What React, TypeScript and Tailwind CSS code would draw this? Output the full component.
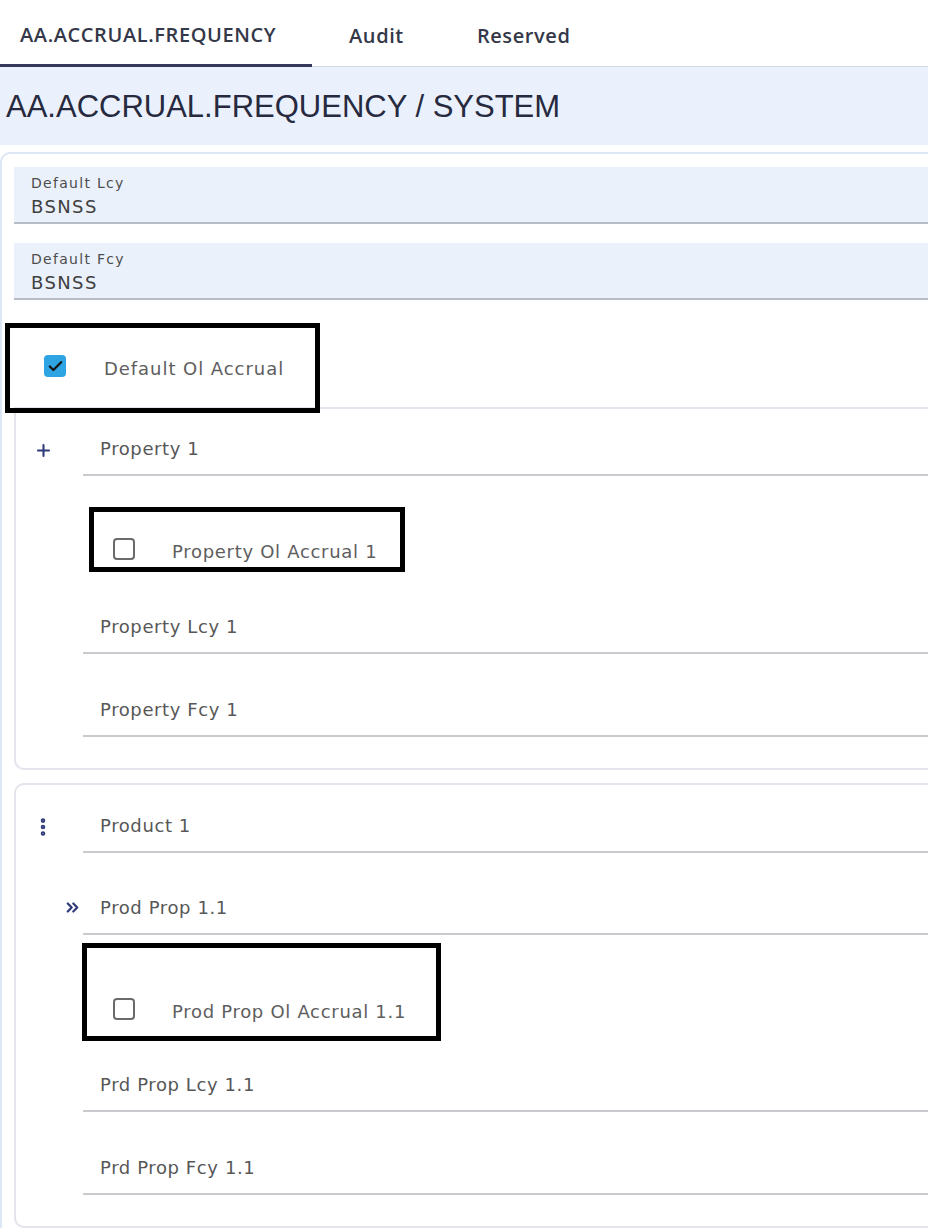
import React from "react";
import { Plus, Check, EllipsisVertical, ChevronsRight } from "lucide-react";

const wideFont = { fontFamily: "'DejaVu Sans', Verdana, sans-serif" };

const Annotation: React.FC<{ className: string }> = ({ className }) => (
  <div className={`absolute border-[5px] border-black pointer-events-none ${className}`} />
);

const Box: React.FC<{ checked?: boolean }> = ({ checked }) =>
  checked ? (
    <span className="w-[22px] h-[22px] shrink-0 rounded-[4px] bg-[#2fa4e3] flex items-center justify-center">
      <Check className="w-[17px] h-[17px] text-[#141414]" strokeWidth={3.2} />
    </span>
  ) : (
    <span className="w-[22px] h-[22px] shrink-0 rounded-[4px] border-2 border-[#6b6b6b] bg-white" />
  );

const FilledField: React.FC<{ label: string; value: string }> = ({ label, value }) => (
  <div className="ml-[12px] h-[57px] bg-[#eaf1fb] border-b-2 border-[#b8bcc4] pl-[17px] pt-[7px] flex flex-col" style={wideFont}>
    <span className="text-[14px] leading-[18px] text-[#4d4d4d] tracking-[1.3px]">{label}</span>
    <span className="mt-[4px] text-[18px] leading-[22px] text-[#404040] tracking-[1.4px]">{value}</span>
  </div>
);

const LineField: React.FC<{ label: string; icon?: React.ReactNode; height?: string }> = ({
  label,
  icon,
  height = "h-[83px]",
}) => (
  <div className={`flex ${height}`}>
    <div className="w-[67px] relative shrink-0">{icon}</div>
    <div className="flex-1 border-b-2 border-[#c9cacd] flex items-end pl-[17px] pb-[14px]">
      <span className="text-[18px] leading-[22px] text-[#575757] tracking-[0.6px]" style={wideFont}>
        {label}
      </span>
    </div>
  </div>
);

const CheckRow: React.FC<{ label: string; checked?: boolean; className: string; boxClass: string }> = ({
  label,
  checked,
  className,
  boxClass,
}) => (
  <div className={`relative ${className}`}>
    <div className="flex items-start gap-[37px] pl-[97px]">
      <Box checked={checked} />
      <span className="text-[18px] leading-[22px] mt-[3px] text-[#5e5e5e] tracking-[0.7px]" style={wideFont}>
        {label}
      </span>
    </div>
    <Annotation className={boxClass} />
  </div>
);

export default function App() {
  return (
    <div className="w-[928px] h-[1228px] overflow-hidden bg-white" style={{ fontFamily: "'Open Sans', sans-serif" }}>
      {/* Tabs */}
      <div className="h-[67px] flex items-stretch border-b border-[#d3d6dc] shadow-[0_1px_2px_rgba(0,0,0,0.08)]">
        <div className="w-[312px] flex items-center pl-[20px] pt-[5px] border-b-[3px] border-[#35395a] -mb-px">
          <span className="text-[20px] font-semibold text-[#343848] tracking-[0.6px]">AA.ACCRUAL.FREQUENCY</span>
        </div>
        <div className="flex items-center pl-[37px] pt-[5px]">
          <span className="text-[20px] font-semibold text-[#343848] tracking-[0.6px]">Audit</span>
        </div>
        <div className="flex items-center pl-[73px] pt-[5px]">
          <span className="text-[20px] font-semibold text-[#343848] tracking-[0.6px]">Reserved</span>
        </div>
      </div>

      {/* Title band */}
      <div className="h-[78px] bg-[#eaf1fc] flex items-center pl-[6px] pt-[2px]">
        <h1
          className="text-[31px] text-[#272a3f] tracking-[0px]"
          style={{ fontFamily: "'Liberation Sans', Arial, sans-serif" }}
        >
          AA.ACCRUAL.FREQUENCY / SYSTEM
        </h1>
      </div>

      {/* Outer card */}
      <div className="mt-[7px] border-l-2 border-t-2 border-[#dce6f4] rounded-tl-[10px] pt-[13px] w-[940px]">
        <FilledField label="Default Lcy" value="BSNSS" />
        <div className="h-[19px]" />
        <FilledField label="Default Fcy" value="BSNSS" />

        {/* Default Ol Accrual */}
        <div className="relative h-[107px] pl-[42px] pt-[55px]">
          <div className="flex items-start gap-[38px]">
            <Box checked />
            <span className="text-[18px] leading-[22px] mt-[3px] text-[#5e5e5e] tracking-[0.95px]" style={wideFont}>
              Default Ol Accrual
            </span>
          </div>
          <Annotation className="left-[3px] top-[23px] w-[315px] h-[90px]" />
        </div>

        {/* Property card */}
        <div className="ml-[12px] border-l-2 border-t-2 border-b-2 border-[#e3e4ec] rounded-bl-[10px] pb-[31px]">
          <LineField
            label="Property 1"
            height="h-[67px]"
            icon={<Plus className="absolute left-[18px] top-[32px] w-[19px] h-[19px] text-[#2f3a78]" strokeWidth={2.6} />}
          />
          <CheckRow
            label="Property Ol Accrual 1"
            className="h-[95px] pt-[62px]"
            boxClass="left-[73px] top-[31px] w-[316px] h-[65px]"
          />
          <LineField label="Property Lcy 1" />
          <LineField label="Property Fcy 1" />
        </div>

        {/* Product card */}
        <div className="mt-[13px] ml-[12px] border-l-2 border-t-2 border-b-2 border-[#e3e4ec] rounded-l-[10px] pb-[31px]">
          <LineField
            label="Product 1"
            height="h-[68px]"
            icon={
              <EllipsisVertical
                className="absolute left-[16px] top-[31px] w-[22px] h-[22px] text-[#2f3a78]"
                strokeWidth={3}
              />
            }
          />
          <LineField
            label="Prod Prop 1.1"
            height="h-[82px]"
            icon={<ChevronsRight className="absolute left-[47px] top-[45px] w-[19px] h-[19px] text-[#2f3a78]" strokeWidth={2.8} />}
          />
          <CheckRow
            label="Prod Prop Ol Accrual 1.1"
            className="h-[94px] pt-[63px]"
            boxClass="left-[66px] top-[8px] w-[359px] h-[98px]"
          />
          <LineField label="Prd Prop Lcy 1.1" />
          <LineField label="Prd Prop Fcy 1.1" />
        </div>
      </div>
    </div>
  );
}
